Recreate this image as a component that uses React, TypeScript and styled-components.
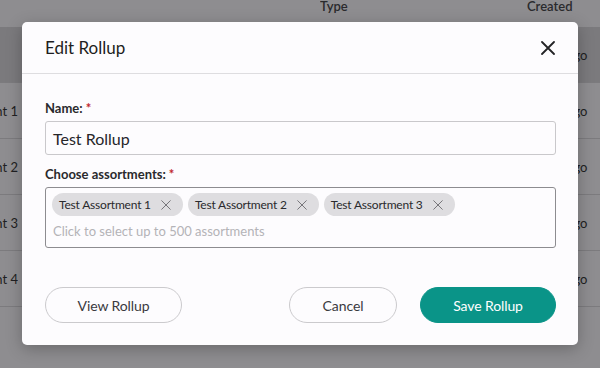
import styled, { createGlobalStyle } from "styled-components";

const GlobalStyle = createGlobalStyle`
  html, body {
    margin: 0;
    padding: 0;
    font-family: Lato, "Open Sans", sans-serif;
  }
  body {
    width: 600px;
    height: 368px;
    overflow: hidden;
    background: #8e8d90;
  }
`;

const Page = styled.div`
  position: relative;
  width: 600px;
  height: 368px;
  overflow: hidden;
  background: #8e8d90;
`;

const Table = styled.div`
  display: flex;
  flex-direction: column;
  color: #1f1f22;
  font-size: 13px;
`;

const HeaderRow = styled.div`
  display: grid;
  grid-template-columns: 18px 302px 207px 1fr;
  height: 27px;
  align-items: start;
  line-height: 13px;
  font-weight: 600;
  color: #2a2a2d;
`;

const Row = styled.div<{ $active?: boolean }>`
  display: grid;
  grid-template-columns: 18px 302px 207px 1fr;
  height: 55px;
  align-items: center;
  border-bottom: 1px solid #7c7b7e;
  background: ${(p) => (p.$active ? "#7b7a7d" : "transparent")};
`;

const NameCell = styled.div`
  display: flex;
  justify-content: flex-end;
  overflow: hidden;
  white-space: nowrap;
`;

const Cell = styled.div`
  white-space: nowrap;
  overflow: hidden;
`;

const Overlay = styled.div`
  position: absolute;
  inset: 0;
  display: flex;
  align-items: flex-start;
  justify-content: center;
  padding-top: 22px;
`;

const Modal = styled.div`
  width: 556px;
  background: #fdfcfe;
  border-radius: 5px;
  box-shadow: 0 4px 16px rgba(0, 0, 0, 0.25);
  display: flex;
  flex-direction: column;
  color: #232326;
`;

const ModalHeader = styled.div`
  height: 51px;
  display: flex;
  align-items: center;
  justify-content: space-between;
  padding: 0 20px 0 23px;
  border-bottom: 1px solid #dedde0;
`;

const Title = styled.h2`
  margin: 0;
  font-size: 17px;
  font-weight: 400;
  color: #1e1e21;
`;

const CloseButton = styled.button`
  border: none;
  background: none;
  padding: 0;
  width: 20px;
  height: 20px;
  display: flex;
  align-items: center;
  justify-content: center;
  color: #232326;
  cursor: pointer;
`;

const Body = styled.div`
  display: flex;
  flex-direction: column;
  padding: 26px 22px 0 23px;
`;

const Label = styled.label`
  font-size: 13px;
  font-weight: 700;
  color: #2a2a2d;
  line-height: 16px;
  margin-bottom: 5px;
`;

const Required = styled.span`
  color: #c0262d;
  margin-left: 3px;
`;

const TextInput = styled.div`
  height: 32px;
  border: 1px solid #c9c8cb;
  border-radius: 3px;
  display: flex;
  align-items: center;
  padding: 0 7px;
  font-size: 16px;
  color: #26262a;
  margin-bottom: 11px;
`;

const MultiSelect = styled.div`
  height: 61px;
  box-sizing: border-box;
  border: 1px solid #8d8c90;
  border-radius: 3px;
  display: flex;
  flex-direction: column;
  padding: 5px 6px 0 6px;
`;

const Chips = styled.div`
  display: flex;
  gap: 5px;
`;

const Chip = styled.div`
  height: 23px;
  box-sizing: border-box;
  border-radius: 12px;
  background: #dedde0;
  display: flex;
  align-items: center;
  gap: 10px;
  padding: 0 12px 0 7px;
  font-size: 12px;
  letter-spacing: -0.2px;
  white-space: nowrap;
  color: #2a2a2d;
`;

const ChipClose = styled.span`
  display: flex;
  color: #6e6d71;
`;

const Placeholder = styled.div`
  font-size: 13px;
  color: #b4b3b7;
  margin-top: 7px;
  padding-left: 1px;
`;

const Footer = styled.div`
  display: flex;
  align-items: center;
  padding: 39px 22px 22px 23px;
`;

const Button = styled.button<{ $primary?: boolean; $w: number }>`
  height: 36px;
  width: ${(p) => p.$w}px;
  border-radius: 18px;
  font-family: inherit;
  font-size: 14px;
  letter-spacing: -0.1px;
  border: 1px solid ${(p) => (p.$primary ? "#0a9488" : "#cbcacd")};
  background: ${(p) => (p.$primary ? "#0a9488" : "#fdfcfe")};
  color: ${(p) => (p.$primary ? "#ffffff" : "#3a3a3e")};
  cursor: pointer;
`;

const Spacer = styled.div`
  flex: 1;
`;

const Gap = styled.div`
  width: 23px;
`;

const XIcon = ({ size, stroke }: { size: number; stroke: number }) => (
  <svg width={size} height={size} viewBox="0 0 14 14" fill="none">
    <path
      d="M1 1L13 13M13 1L1 13"
      stroke="currentColor"
      strokeWidth={stroke}
      strokeLinecap="round"
    />
  </svg>
);

const rows = [
  { name: "", created: "2 days ago", active: true },
  { name: "Test Assortment 1", created: "2 days ago" },
  { name: "Test Assortment 2", created: "2 days ago" },
  { name: "Test Assortment 3", created: "2 days ago" },
  { name: "Test Assortment 4", created: "2 days ago" },
];

const chips = ["Test Assortment 1", "Test Assortment 2", "Test Assortment 3"];

export default function App() {
  return (
    <Page>
      <GlobalStyle />
      <Table>
        <HeaderRow>
          <Cell />
          <Cell />
          <Cell>Type</Cell>
          <Cell>Created</Cell>
        </HeaderRow>
        {rows.map((r, i) => (
          <Row key={i} $active={r.active}>
            <NameCell>{r.name}</NameCell>
            <Cell />
            <Cell>Assortment</Cell>
            <Cell>{r.created}</Cell>
          </Row>
        ))}
      </Table>
      <Overlay>
        <Modal>
          <ModalHeader>
            <Title>Edit Rollup</Title>
            <CloseButton aria-label="Close">
              <XIcon size={14} stroke={1.8} />
            </CloseButton>
          </ModalHeader>
          <Body>
            <Label>
              Name:<Required>*</Required>
            </Label>
            <TextInput>Test Rollup</TextInput>
            <Label>
              Choose assortments:<Required>*</Required>
            </Label>
            <MultiSelect>
              <Chips>
                {chips.map((c) => (
                  <Chip key={c}>
                    {c}
                    <ChipClose>
                      <XIcon size={10} stroke={1.3} />
                    </ChipClose>
                  </Chip>
                ))}
              </Chips>
              <Placeholder>Click to select up to 500 assortments</Placeholder>
            </MultiSelect>
          </Body>
          <Footer>
            <Button $w={137}>View Rollup</Button>
            <Spacer />
            <Button $w={108}>Cancel</Button>
            <Gap />
            <Button $primary $w={136}>
              Save Rollup
            </Button>
          </Footer>
        </Modal>
      </Overlay>
    </Page>
  );
}
